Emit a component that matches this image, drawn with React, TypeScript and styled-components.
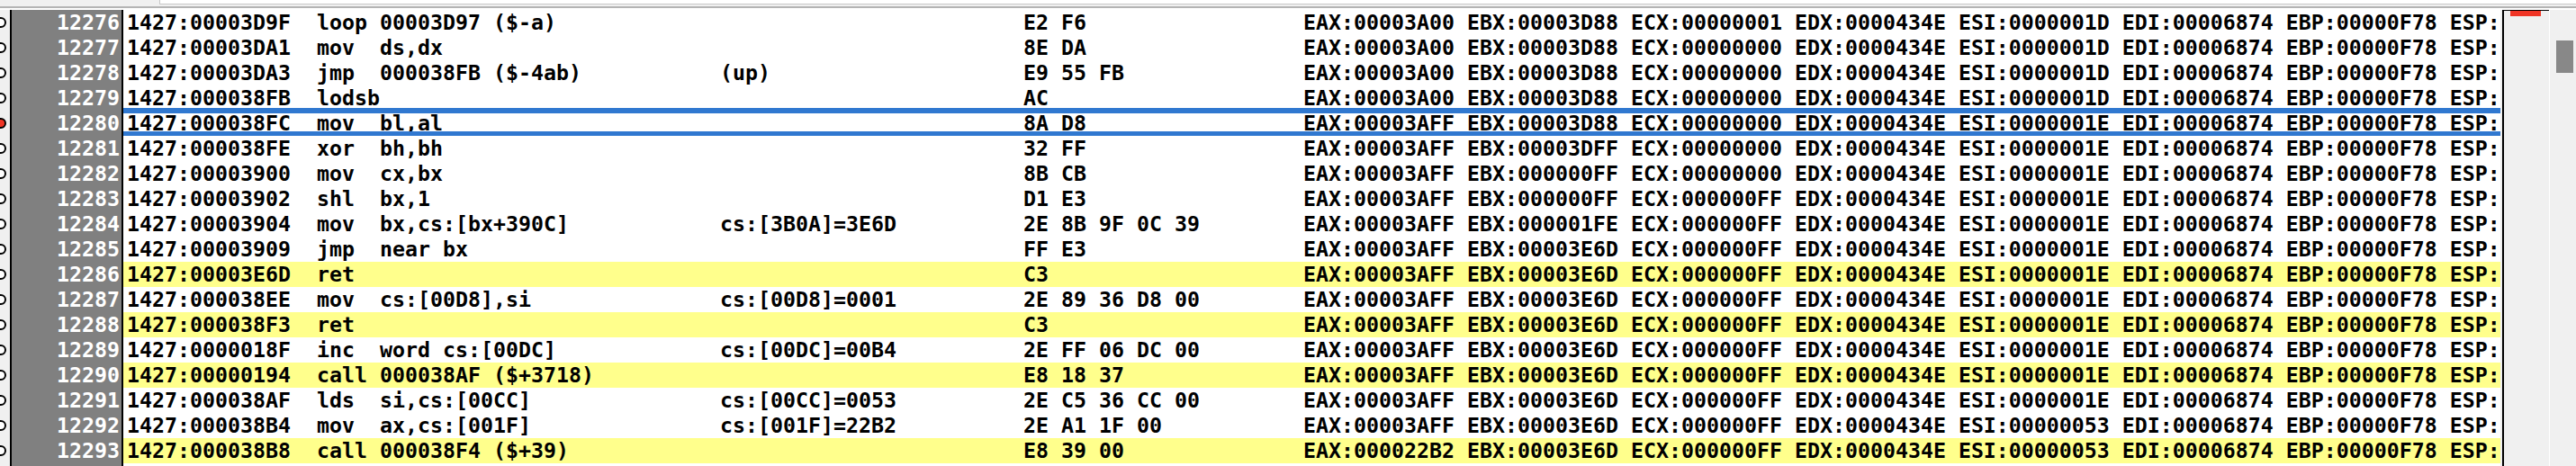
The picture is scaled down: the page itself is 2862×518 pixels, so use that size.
import React from "react";
import styled, { createGlobalStyle } from "styled-components";

const Global = createGlobalStyle`
  html, body { margin: 0; padding: 0; background: #f0f0f0; }
  #root { width: 2862px; height: 518px; overflow: hidden; }
`;

const Page = styled.div`
  width: 2862px;
  height: 518px;
  display: flex;
  flex-direction: column;
  background: #f0f0f0;
  overflow: hidden;
`;

const TopBar = styled.div`
  height: 7px;
  flex: none;
  display: flex;
`;

const TopLeft = styled.div`
  width: 177px;
  background: #f0f0f0;
`;

const TopRight = styled.div`
  flex: 1;
  box-sizing: border-box;
  height: 5px;
  background: #fff;
  border-left: 1px solid #c8c8c8;
  border-bottom: 1px solid #c8c8c8;
`;

const Rule = styled.div`
  height: 4px;
  flex: none;
  box-sizing: border-box;
  background: #ffffff;
  border-top: 2px solid #b4b4b4;
`;

const Body = styled.div`
  flex: 1;
  min-height: 0;
  display: flex;
`;

const Gutter = styled.div`
  width: 11px;
  flex: none;
  display: flex;
  flex-direction: column;
  background: #f0f0f0;
  border-right: 2px solid #000;
`;

const DotCell = styled.div`
  height: 28px;
  flex: none;
  display: flex;
  align-items: center;
  overflow: hidden;
`;

const Dot = styled.div<{ $active?: boolean }>`
  width: 12px;
  height: 12px;
  flex: none;
  box-sizing: border-box;
  margin-left: -5px;
  border-radius: 50%;
  border: 2px solid #000;
  background: ${(p) => (p.$active ? "#f03525" : "#fff")};
`;

const LineNumbers = styled.div`
  width: 122px;
  flex: none;
  background: #808080;
  border-right: 2px solid #000;
`;

const LineNumber = styled.div`
  height: 28px;
  padding-right: 2px;
  text-align: right;
  color: #fff;
  font: 600 23.25px/27px "DejaVu Sans Mono", monospace;
`;

const Listing = styled.div`
  width: 2641px;
  flex: none;
  background: #fff;
  overflow: hidden;
`;

const Row = styled.div<{ $yellow?: boolean }>`
  height: 28px;
  display: flex;
  white-space: pre;
  color: #000;
  background: ${(p) => (p.$yellow ? "#ffff8c" : "transparent")};
  font: 600 23.25px/27px "DejaVu Sans Mono", monospace;
  padding-left: 4px;
  box-sizing: border-box;
`;

const CurrentRow = styled(Row)`
  position: relative;
  &::before,
  &::after {
    content: "";
    position: absolute;
    left: 0;
    right: 0;
    background: #3078d0;
  }
  &::before { top: -3px; height: 6px; }
  &::after { bottom: 0; height: 5px; }
`;

const Col = styled.span<{ $w: number }>`
  flex: none;
  width: ${(p) => p.$w}px;
  overflow: hidden;
`;

const Marker = styled.div`
  width: 52px;
  flex: none;
  margin-left: 2px;
  box-sizing: border-box;
  border-left: 2px solid #000;
  border-top: 1px solid #000;
  padding-left: 7px;
  background: #f0f0f0;
`;

const MarkerFlag = styled.div`
  width: 34px;
  height: 6px;
  background: #f03525;
`;

const Scroll = styled.div`
  flex: 1;
  padding: 34px 3px 0 7px;
  background: #f0f0f0;
  border-left: 1px solid #fff;
`;

const Thumb = styled.div`
  width: 19px;
  height: 36px;
  background: #888888;
`;

const ROWS: [string, string, string, string, string, string, string, string, string, boolean?][] = [
  ["12276", "00003D9F", "loop 00003D97 ($-a)", "", "E2 F6", "00003A00", "00003D88", "00000001", "0000001D"],
  ["12277", "00003DA1", "mov  ds,dx", "", "8E DA", "00003A00", "00003D88", "00000000", "0000001D"],
  ["12278", "00003DA3", "jmp  000038FB ($-4ab)", "(up)", "E9 55 FB", "00003A00", "00003D88", "00000000", "0000001D"],
  ["12279", "000038FB", "lodsb", "", "AC", "00003A00", "00003D88", "00000000", "0000001D"],
  ["12280", "000038FC", "mov  bl,al", "", "8A D8", "00003AFF", "00003D88", "00000000", "0000001E"],
  ["12281", "000038FE", "xor  bh,bh", "", "32 FF", "00003AFF", "00003DFF", "00000000", "0000001E"],
  ["12282", "00003900", "mov  cx,bx", "", "8B CB", "00003AFF", "000000FF", "00000000", "0000001E"],
  ["12283", "00003902", "shl  bx,1", "", "D1 E3", "00003AFF", "000000FF", "000000FF", "0000001E"],
  ["12284", "00003904", "mov  bx,cs:[bx+390C]", "cs:[3B0A]=3E6D", "2E 8B 9F 0C 39", "00003AFF", "000001FE", "000000FF", "0000001E"],
  ["12285", "00003909", "jmp  near bx", "", "FF E3", "00003AFF", "00003E6D", "000000FF", "0000001E"],
  ["12286", "00003E6D", "ret", "", "C3", "00003AFF", "00003E6D", "000000FF", "0000001E", true],
  ["12287", "000038EE", "mov  cs:[00D8],si", "cs:[00D8]=0001", "2E 89 36 D8 00", "00003AFF", "00003E6D", "000000FF", "0000001E"],
  ["12288", "000038F3", "ret", "", "C3", "00003AFF", "00003E6D", "000000FF", "0000001E", true],
  ["12289", "0000018F", "inc  word cs:[00DC]", "cs:[00DC]=00B4", "2E FF 06 DC 00", "00003AFF", "00003E6D", "000000FF", "0000001E"],
  ["12290", "00000194", "call 000038AF ($+3718)", "", "E8 18 37", "00003AFF", "00003E6D", "000000FF", "0000001E", true],
  ["12291", "000038AF", "lds  si,cs:[00CC]", "cs:[00CC]=0053", "2E C5 36 CC 00", "00003AFF", "00003E6D", "000000FF", "0000001E"],
  ["12292", "000038B4", "mov  ax,cs:[001F]", "cs:[001F]=22B2", "2E A1 1F 00", "00003AFF", "00003E6D", "000000FF", "00000053"],
  ["12293", "000038B8", "call 000038F4 ($+39)", "", "E8 39 00", "000022B2", "00003E6D", "000000FF", "00000053", true],
];

const CURRENT = "12280";

export default function App() {
  return (
    <Page>
      <Global />
      <TopBar>
        <TopLeft />
        <TopRight />
      </TopBar>
      <Rule />
      <Body>
        <Gutter>
          {ROWS.map((r) => (
            <DotCell key={r[0]}>
              <Dot $active={r[0] === CURRENT} />
            </DotCell>
          ))}
        </Gutter>
        <LineNumbers>
          {ROWS.map((r) => (
            <LineNumber key={r[0]}>{r[0]}</LineNumber>
          ))}
        </LineNumbers>
        <Listing>
          {ROWS.map((r) => {
            const RowKind = r[0] === CURRENT ? CurrentRow : Row;
            return (
              <RowKind key={r[0]} $yellow={r[9]}>
                <Col $w={211}>{`1427:${r[1]}`}</Col>
                <Col $w={448}>{r[2]}</Col>
                <Col $w={337}>{r[3]}</Col>
                <Col $w={311}>{r[4]}</Col>
                <Col $w={1330}>
                  {`EAX:${r[5]} EBX:${r[6]} ECX:${r[7]} EDX:0000434E ESI:${r[8]} EDI:00006874 EBP:00000F78 ESP:`}
                </Col>
              </RowKind>
            );
          })}
        </Listing>
        <Marker>
          <MarkerFlag />
        </Marker>
        <Scroll>
          <Thumb />
        </Scroll>
      </Body>
    </Page>
  );
}
